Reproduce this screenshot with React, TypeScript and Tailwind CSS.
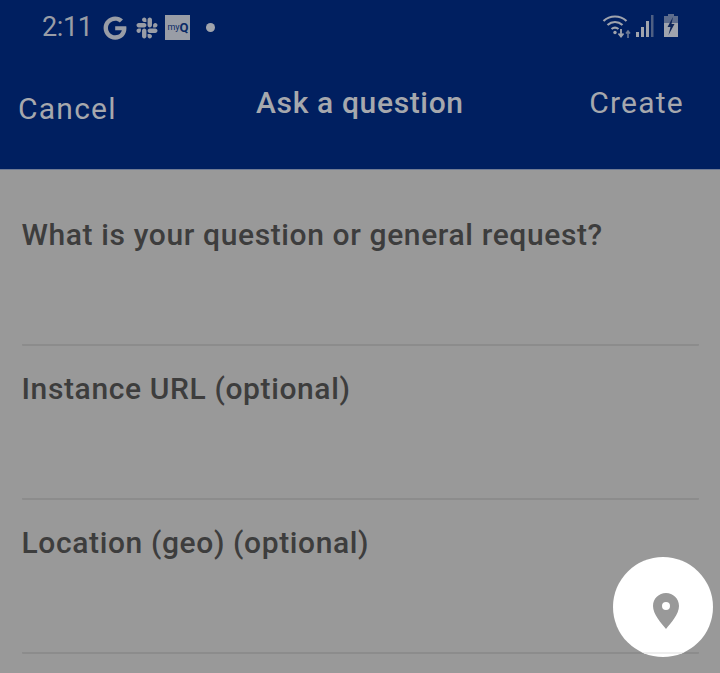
import { FaGoogle, FaSlack } from "react-icons/fa";

function MyQ() {
  return (
    <div className="w-[25px] h-[25px] bg-[#999da6] flex items-center justify-center text-[#0b2a66] font-['Roboto',sans-serif] leading-none">
      <span className="text-[9px]">my</span>
      <span className="text-[13px] font-bold">Q</span>
    </div>
  );
}

function Wifi() {
  return (
    <svg width="30" height="28" viewBox="0 0 30 28" fill="none" aria-hidden>
      <path d="M1.5 9C8 3 18 3 24.500 9" stroke="#a0a4ad" strokeWidth="2.2" />
      <path d="M5.500 13c4.500-4 10.500-4 15 0" stroke="#a0a4ad" strokeWidth="2.2" />
      <path d="M9.500 17c2.500-2 4.500-2 7 0" stroke="#a0a4ad" strokeWidth="2.200" />
      <circle cx="13" cy="20.500" r="1.700" fill="#a0a4ad" />
      <path d="M19 17v7M16.500 21.500l2.500 3 2.500-3" stroke="#a0a4ad" strokeWidth="1.800" />
      <path d="M26 26v-7M24 21.500l2-2.500 2 2.500" stroke="#6d7a94" strokeWidth="1.600" />
    </svg>
  );
}

function Signal() {
  return (
    <svg width="20" height="24" viewBox="0 0 20 24" aria-hidden>
      <rect x="1" y="18" width="3" height="5" fill="#a0a4ad" />
      <rect x="6" y="13" width="3" height="10" fill="#a0a4ad" />
      <rect x="11" y="7" width="3" height="16" fill="#a0a4ad" />
      <rect x="16" y="1" width="2.500" height="22" fill="#4e5f83" />
    </svg>
  );
}

function Battery() {
  return (
    <svg width="14" height="24" viewBox="0 0 14 24" aria-hidden>
      <rect x="4" y="0" width="6" height="3" fill="#5d6c8c" />
      <rect x="0" y="2" width="14" height="8" fill="#5d6c8c" />
      <rect x="0" y="9" width="14" height="14" fill="#a0a4ad" />
      <path d="M9 3 3.500 13h3l-2 8 6-11h-3z" fill="#0e2558" />
    </svg>
  );
}

function Field({ label }: { label: string }) {
  return (
    <div className="h-[154px] pt-[23px] border-b-2 border-[#8c8c8c] rounded-b-[1px]">
      <div className="text-[30px] leading-[40px] font-medium text-[#3d3d3d] tracking-[0.62px]">{label}</div>
    </div>
  );
}

export default function App() {
  return (
    <div className="relative w-[720px] h-[673px] overflow-hidden bg-[#999999] font-['Roboto',sans-serif]">
      <header className="h-[170px] bg-[#001f60] border-b border-[#6f7a94] flex flex-col">
        <div className="h-[55px] pl-[42px] pr-[42px] flex items-center">
          <span className="text-[27px] leading-none text-[#999da6] tracking-[-0.4px] mr-[11px]">2:11</span>
          <FaGoogle className="w-[24px] h-[24px] text-[#999da6]" />
          <span className="w-[8px]" />
          <FaSlack className="w-[24px] h-[24px] text-[#999da6]" />
          <span className="w-[6px]" />
          <MyQ />
          <span className="w-[16px]" />
          <span className="w-[9px] h-[9px] rounded-full bg-[#a0a4ad]" />
          <div className="ml-auto -mt-[3px] flex items-center gap-[3px]">
            <Wifi />
            <Signal />
            <span className="w-[3px]" />
            <Battery />
          </div>
        </div>
        <div className="flex-1 flex pl-[18px] pr-[36px] text-[#a6a8ad]">
          <span className="w-[238px] text-[30px] leading-[40px] tracking-[1.25px] mt-[34px]">Cancel</span>
          <span className="text-[30px] leading-[40px] font-medium tracking-[0.65px] mt-[28px]">Ask a question</span>
          <span className="ml-auto text-[30px] leading-[40px] tracking-[1.25px] mt-[28px]">Create</span>
        </div>
      </header>
      <main className="pl-[21.5px] pr-[21px] pt-[22px]">
        <Field label="What is your question or general request?" />
        <Field label="Instance URL (optional)" />
        <Field label="Location (geo) (optional)" />
      </main>
      <button className="absolute left-[613px] top-[557px] w-[100px] h-[100px] rounded-full bg-white overflow-hidden flex items-center justify-center">
        <span className="absolute left-0 top-[95px] w-[86px] h-[2px] bg-[#eeeeee]" />
        <svg width="26" height="36" viewBox="0 0 26 36" className="ml-[5px] mt-[7px]" aria-hidden>
          <path fillRule="evenodd" fill="#999999" d="M13 0C6 0 0 5.500 0 13c0 8 8 17 13 23 5-6 13-15 13-23C26 5.500 20 0 13 0Zm0 9a4 4 0 1 1 0 8 4 4 0 0 1 0-8Z" />
        </svg>
      </button>
    </div>
  );
}
